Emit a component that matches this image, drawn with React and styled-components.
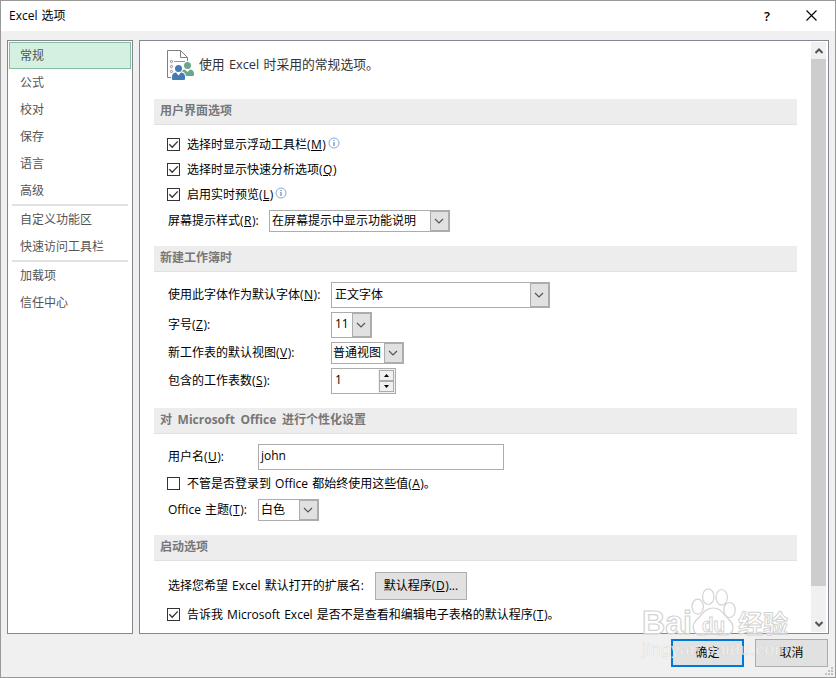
import React from 'react'
import styled, { createGlobalStyle } from 'styled-components'

const GlobalStyle = createGlobalStyle`
  * {
    box-sizing: border-box;
  }
  body {
    margin: 0;
    font-family: "Open Sans", "Noto Sans CJK SC", sans-serif;
    font-size: 12px;
    line-height: 16px;
    word-spacing: 1px;
    color: #000;
  }
  u {
    padding: 0 0.5px;
  }
`

const Window = styled.div`
  position: relative;
  display: flex;
  flex-direction: column;
  width: 836px;
  height: 678px;
  border: 1px solid #999;
  background: #f0f0f0;
  overflow: hidden;
  white-space: nowrap;
`

const TitleBar = styled.header`
  display: flex;
  align-items: center;
  height: 30px;
  padding: 0 18px 1px 8px;
  background: #fff;
`

const Title = styled.span`
  flex: 1;
  padding-top: 1px;
`

const HelpMark = styled.span`
  margin-right: 36px;
  font-size: 13px;
  font-weight: 600;
`

const Body = styled.div`
  display: flex;
  gap: 6px;
  height: 594px;
  margin: 9px 6px 0;
`

const Nav = styled.nav`
  width: 126px;
  padding: 1px;
  border: 1px solid #828790;
  background: #fff;
`

const NavItem = styled.div`
  display: flex;
  align-items: center;
  height: 27px;
  padding: 1px 0 0 ${({ $active }) => ($active ? '10px' : '11px')};
  color: #555;
  border: ${({ $active }) => ($active ? '1px solid #86bfa0' : 'none')};
  background: ${({ $active }) => ($active ? '#d3f0e0' : 'transparent')};
`

const NavLine = styled.div`
  height: 2px;
  margin: 0 3px;
  background: #e2e2e2;
`

const Panel = styled.main`
  display: flex;
  width: 690px;
  padding: 1px;
  border: 1px solid #828790;
  background: #fff;
`

const Content = styled.div`
  width: 670px;
  padding-left: 13px;
`

const Intro = styled.div`
  display: flex;
  align-items: center;
  gap: 5px;
  height: 57px;
  padding: 0 0 12px 12px;
  font-size: 12.8px;
  color: #333;

  span {
    padding-bottom: 2px;
  }
`

const SectionTitle = styled.h2`
  width: 643px;
  height: 26px;
  margin: 0;
  padding-left: 6px;
  border-bottom: 1px solid #e1e1e1;
  background: #ededed;
  font-size: 12px;
  font-weight: 700;
  line-height: 24px;
  word-spacing: 2.500px;
  color: #777;
`

const Fields = styled.div`
  height: ${({ $height }) => $height}px;
  padding: ${({ $top }) => $top}px 0 0 13px;
`

const Row = styled.div`
  display: flex;
  align-items: center;
  height: ${({ $height }) => $height || 28}px;
`

const Label = styled.label`
  width: ${({ $width }) => $width}px;
  padding-left: 1px;
`

const Box = styled.span`
  display: flex;
  width: 13px;
  height: 13px;
  margin-right: 7px;
  border: 1px solid #333;
  background: #fff;
`

const InfoIcon = styled.svg`
  margin: -4px 0 0 2px;
`

const SelectBox = styled.div`
  display: flex;
  width: ${({ $width }) => $width}px;
  height: ${({ $height }) => $height || 22}px;
  border: 1px solid #acacac;
  background: #fff;
`

const Value = styled.span`
  flex: 1;
  padding-left: ${({ $pad }) => $pad || 2}px;
  line-height: ${({ $line }) => $line || 20}px;
`

const SelectArrow = styled.span`
  display: flex;
  align-items: center;
  justify-content: center;
  width: 19px;
  padding-right: 1px;
  border: 1px solid #acacac;
  background: #e1e1e1;
`

const Spinner = styled.span`
  display: flex;
  flex-direction: column;
  width: 17px;
  padding: 1px 1px 1px 1px;
  background: #f0f0f0;
`

const SpinButton = styled.span`
  display: flex;
  flex: 1;
  align-items: center;
  justify-content: center;
  border: 1px solid #acacac;
`

const Button = styled.button`
  width: ${({ $width }) => $width || 73}px;
  height: 28px;
  padding: 0 0 1px;
  border: ${({ $primary }) => ($primary ? '2px solid #0078d7' : '1px solid #adadad')};
  background: #e1e1e1;
  font: inherit;
  color: #000;
`

const ScrollBar = styled.div`
  display: flex;
  flex-direction: column;
  width: 15px;
  background: #f0f0f0;
`

const ScrollEnd = styled.div`
  display: flex;
  align-items: center;
  justify-content: center;
  height: 17px;
`

const Thumb = styled.div`
  height: 527px;
  background: #cdcdcd;
`

const Gap = styled.div`
  flex: 1;
`

const Footer = styled.footer`
  display: flex;
  justify-content: flex-end;
  gap: 11px;
  padding: 5px 7px 0 0;
`

const Grip = styled.svg`
  position: absolute;
  right: 2px;
  bottom: 2px;
`

const Watermark = styled.svg`
  position: absolute;
  left: 633px;
  top: 580px;
  pointer-events: none;
`

const Chevron = () => (
  <svg width="10" height="6" viewBox="0 0 10 6" fill="none">
    <path d="M1 1l4 4 4-4" stroke="#555" strokeWidth="1.2" />
  </svg>
)

const Check = ({ checked, children, info }) => (
  <>
    <Box>
      {checked && (
        <svg width="11" height="11" viewBox="0 0 11 11" fill="none">
          <path d="M1.3 5.3l2.9 2.9 5.6-5.8" stroke="#333" strokeWidth="1.3" />
        </svg>
      )}
    </Box>
    <span>{children}</span>
    {info && (
      <InfoIcon width="12" height="12" viewBox="0 0 12 12" fill="none">
        <circle cx="6" cy="6" r="5" stroke="#83a9d6" />
        <path d="M6 3v1M6 5v4" stroke="#4a7ebb" strokeWidth="1.1" />
      </InfoIcon>
    )}
  </>
)

const Select = ({ width, height, pad, line, children }) => (
  <SelectBox $width={width} $height={height}>
    <Value $pad={pad} $line={line}>{children}</Value>
    <SelectArrow><Chevron /></SelectArrow>
  </SelectBox>
)

const PeopleIcon = () => (
  <svg width="28" height="31" viewBox="0 0 28 31" fill="none">
    <path d="M5 28.5H1.5v-27h13l7 7V12M14.5 1.5v7h7" stroke="#7f7f7f" />
    <path d="M8 12.500h11" stroke="#999" />
    <g stroke="#8a8a8a">
      <circle cx="5.500" cy="12.500" r="1.100" />
      <circle cx="5.500" cy="17.500" r="1.100" />
      <circle cx="5.500" cy="22.500" r="1.100" />
    </g>
    <circle cx="21.500" cy="16.500" r="3.500" fill="#6aa78c" />
    <path d="M15 27v-2.500c0-2.500 2-4 4-4l2.500 2.500 2.500-2.500c2 0 4 1.500 4 4V26q0 1-1 1z" fill="#6aa78c" />
    <circle cx="12.500" cy="19.500" r="4.500" fill="#fff" />
    <path d="M5 31v-3.500c0-3 2-5 4.500-5h6c2.500 0 4.500 2 4.500 5V31z" fill="#fff" />
    <circle cx="12.500" cy="19.500" r="3.500" fill="#457ab3" />
    <path d="M6 30v-2.500c0-2.500 2-4 4-4l2.500 3 2.500-3c2 0 4 1.500 4 4V30q0 1-1 1H7q-1 0-1-1z" fill="#457ab3" />
  </svg>
)

const navGroups = [
  ['常规', '公式', '校对', '保存', '语言', '高级'],
  ['自定义功能区', '快速访问工具栏'],
  ['加载项', '信任中心'],
]

const gripDots = [[6, 0], [3, 3], [6, 3], [0, 6], [3, 6], [6, 6]]

const App = () => {
  return (
    <>
      <GlobalStyle />
      <Window>
        <TitleBar>
          <Title>Excel 选项</Title>
          <HelpMark>?</HelpMark>
          <svg width="11" height="11" viewBox="0 0 11 11">
            <path d="M.5.5l10 10M10.500.5l-10 10" stroke="#000" strokeWidth="1.1" />
          </svg>
        </TitleBar>
        <Body>
          <Nav>
            {navGroups.map((group, i) => (
              <React.Fragment key={i}>
                {i > 0 && <NavLine />}
                {group.map((item) => (
                  <NavItem key={item} $active={item === '常规'}>{item}</NavItem>
                ))}
              </React.Fragment>
            ))}
          </Nav>
          <Panel>
            <Content>
              <Intro>
                <PeopleIcon />
                <span>使用 Excel 时采用的常规选项。</span>
              </Intro>

              <SectionTitle>用户界面选项</SectionTitle>
              <Fields $top={7} $height={121}>
                <Row $height={25}><Check checked info>选择时显示浮动工具栏(<u>M</u>)</Check></Row>
                <Row $height={25}><Check checked>选择时显示快速分析选项(<u>Q</u>)</Check></Row>
                <Row $height={25}><Check checked info>启用实时预览(<u>L</u>)</Check></Row>
                <Row>
                  <Label $width={102}>屏幕提示样式(<u>R</u>):</Label>
                  <Select width={181}>在屏幕提示中显示功能说明</Select>
                </Row>
              </Fields>

              <SectionTitle>新建工作簿时</SectionTitle>
              <Fields $top={8} $height={136}>
                <Row $height={30}>
                  <Label $width={164}>使用此字体作为默认字体(<u>N</u>):</Label>
                  <Select width={219} height={26} pad={3} line={23}>正文字体</Select>
                </Row>
                <Row $height={30}>
                  <Label $width={164}>字号(<u>Z</u>):</Label>
                  <Select width={41} height={26} pad={3} line={22}>11</Select>
                </Row>
                <Row $height={26}>
                  <Label $width={164}>新工作表的默认视图(<u>V</u>):</Label>
                  <Select width={73} pad={1}>普通视图</Select>
                </Row>
                <Row $height={30}>
                  <Label $width={164}>包含的工作表数(<u>S</u>):</Label>
                  <SelectBox $width={65} $height={26}>
                    <Value $pad={3} $line={22}>1</Value>
                    <Spinner>
                      <SpinButton>
                        <svg width="5" height="3"><path d="M0 3L2.500 0 5 3z" /></svg>
                      </SpinButton>
                      <SpinButton>
                        <svg width="5" height="3"><path d="M0 0l2.500 3L5 0z" /></svg>
                      </SpinButton>
                    </Spinner>
                  </SelectBox>
                </Row>
              </Fields>

              <SectionTitle>对 Microsoft Office 进行个性化设置</SectionTitle>
              <Fields $top={8} $height={101}>
                <Row $height={30}>
                  <Label $width={91}>用户名(<u>U</u>):</Label>
                  <SelectBox $width={246} $height={26}><Value $line={22}>john</Value></SelectBox>
                </Row>
                <Row $height={23}><Check>不管是否登录到 Office 都始终使用这些值(<u>A</u>)。</Check></Row>
                <Row $height={30}>
                  <Label $width={91}>Office 主题(<u>T</u>):</Label>
                  <Select width={61}>白色</Select>
                </Row>
              </Fields>

              <SectionTitle>启动选项</SectionTitle>
              <Fields $top={10} $height={71}>
                <Row $height={30}>
                  <Label $width={208}>选择您希望 Excel 默认打开的扩展名:</Label>
                  <Button $width={92}>默认程序(<u>D</u>)...</Button>
                </Row>
                <Row $height={27}><Check checked>告诉我 Microsoft Excel 是否不是查看和编辑电子表格的默认程序(<u>T</u>)。</Check></Row>
              </Fields>
            </Content>
            <ScrollBar>
              <ScrollEnd>
                <svg width="8" height="6" fill="none"><path d="M.5 5L4 1.500 7.500 5" stroke="#555" strokeWidth="2" /></svg>
              </ScrollEnd>
              <Thumb />
              <Gap />
              <ScrollEnd>
                <svg width="8" height="6" fill="none"><path d="M.5 1L4 4.500 7.500 1" stroke="#555" strokeWidth="2" /></svg>
              </ScrollEnd>
            </ScrollBar>
          </Panel>
        </Body>
        <Footer>
          <Button $primary>确定</Button>
          <Button>取消</Button>
        </Footer>
        <Grip width="8" height="8" fill="#bfbfbf">
          {gripDots.map(([x, y]) => <rect key={`${x}-${y}`} x={x} y={y} width="2" height="2" />)}
        </Grip>
        <Watermark width="165" height="85" fill="#fff" fillOpacity="0.6" stroke="#d3d3d3" strokeWidth="1.2">
          <g fontFamily="Liberation Sans, Noto Sans CJK SC, sans-serif" fontWeight="700">
            <text x="8" y="53" fontSize="33" textLength="50" lengthAdjust="spacingAndGlyphs">Bai</text>
            <ellipse cx="63.700" cy="25.700" rx="5.700" ry="7.500" />
            <ellipse cx="74.300" cy="15.700" rx="5.700" ry="7.800" />
            <ellipse cx="87.700" cy="16.300" rx="5.700" ry="7.800" />
            <ellipse cx="95.500" cy="29" rx="5.700" ry="7.500" />
            <path d="M79.500 27c7 0 9 5 14 10 9 8 6 17-3 17-5 0-16-2-21 0-11 1-14-10-5-17 5-5 7-10 15-10z" />
            <text x="68" y="51" fontSize="20" textLength="23" lengthAdjust="spacingAndGlyphs" strokeWidth="1">du</text>
            <text x="104" y="52" fontSize="25" strokeWidth="1">经验</text>
          </g>
          <text
            x="8"
            y="74"
            fontFamily="Liberation Sans, sans-serif"
            fontSize="17"
            textLength="147"
            fillOpacity="0.75"
            stroke="#bbb"
            strokeOpacity="0.4"
            strokeWidth="0.6"
          >
            jingyan.baidu.com
          </text>
        </Watermark>
      </Window>
    </>
  )
}

export default App
